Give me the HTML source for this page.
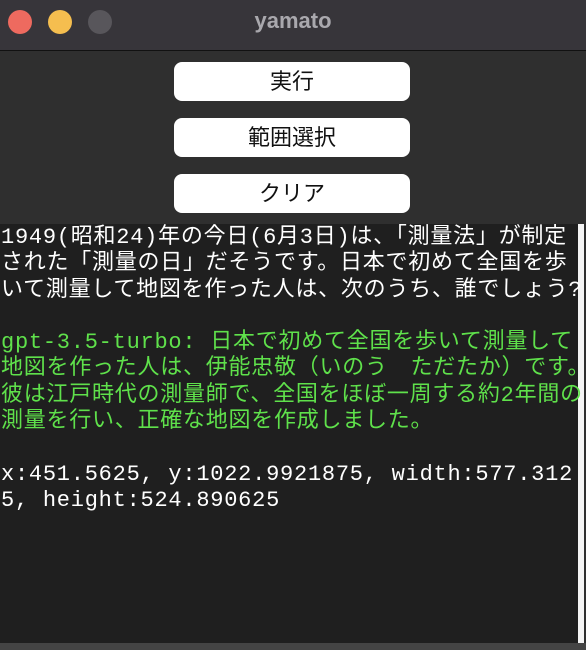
<!DOCTYPE html>
<html><head><meta charset="utf-8"><style>
html,body{margin:0;padding:0;}
body{width:586px;height:650px;background:#2f2f2f;position:relative;overflow:hidden;font-family:"Liberation Sans","Noto Sans CJK JP",sans-serif;}
.title{position:absolute;left:0;top:0;width:586px;height:50px;background:#37353a;border-bottom:1px solid #111;}
.dot{position:absolute;top:10px;width:24px;height:24px;border-radius:50%;}
.t{position:absolute;left:0;width:586px;top:8px;text-align:center;color:#a9a8ad;font-weight:bold;font-size:22px;}
.btn{position:absolute;left:174px;width:236px;height:39px;background:#fff;border-radius:8px;text-align:center;line-height:39px;font-size:22px;color:#111;}
.area{position:absolute;left:0;top:224px;width:578px;height:419px;background:#1f1f1f;}
.sb{position:absolute;left:578px;top:224px;width:6px;height:419px;background:#f4f4f4;}
.bot{position:absolute;left:0;top:643px;width:586px;height:7px;background:#444;}
pre{margin:0;position:absolute;left:1px;top:225px;font-family:"Liberation Mono","Noto Sans CJK JP",monospace;font-size:22px;line-height:26.3px;color:#fff;white-space:pre;letter-spacing:0.75px;}
.g{color:#5fe14b;}
</style></head><body>
<div class="title">
<div class="dot" style="left:8px;background:#ee6a5f"></div>
<div class="dot" style="left:48px;background:#f5be4f"></div>
<div class="dot" style="left:88px;background:#58565b"></div>
<div class="t">yamato</div>
</div>
<div class="btn" style="top:62px">実行</div>
<div class="btn" style="top:118px">範囲選択</div>
<div class="btn" style="top:174px">クリア</div>
<div class="area"></div>
<div class="sb"></div>
<div class="bot"></div>
<pre>1949(昭和24)年の今日(6月3日)は、「測量法」が制定
された「測量の日」だそうです。日本で初めて全国を歩
いて測量して地図を作った人は、次のうち、誰でしょう?

<span class="g">gpt-3.5-turbo: 日本で初めて全国を歩いて測量して
地図を作った人は、伊能忠敬（いのう　ただたか）です。
彼は江戸時代の測量師で、全国をほぼ一周する約2年間の
測量を行い、正確な地図を作成しました。</span>

x:451.5625, y:1022.9921875, width:577.312
5, height:524.890625</pre>
</body></html>
